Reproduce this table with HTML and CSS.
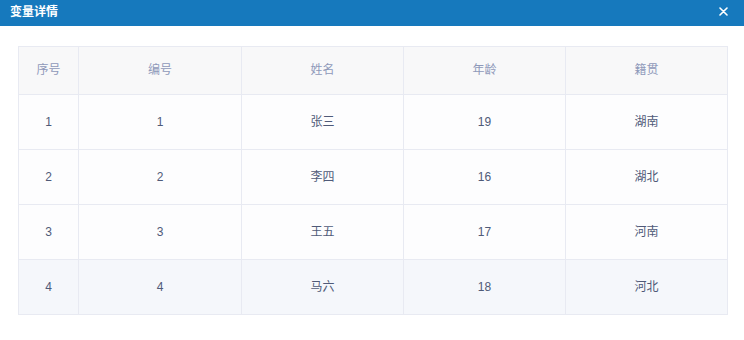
FILE: index.html
```html
<!DOCTYPE html>
<html lang="zh">
<head>
<meta charset="utf-8">
<link rel="stylesheet" href="styles.css">
</head>
<body>
<div class="dialog">
  <div class="header">
    <span class="title">变量详情</span>
    <span class="close">
      <svg width="9" height="9" viewBox="0 0 9 9"><path d="M1 1L8 8M8 1L1 8" stroke="#fff" stroke-width="1.6" stroke-linecap="round"/></svg>
    </span>
  </div>
  <div class="body">
    <table class="grid">
      <colgroup>
        <col class="c1"><col class="c2"><col class="c3"><col class="c4"><col class="c5">
      </colgroup>
      <thead>
        <tr><th>序号</th><th>编号</th><th>姓名</th><th>年龄</th><th>籍贯</th></tr>
      </thead>
      <tbody>
        <tr><td>1</td><td>1</td><td>张三</td><td>19</td><td>湖南</td></tr>
        <tr><td>2</td><td>2</td><td>李四</td><td>16</td><td>湖北</td></tr>
        <tr><td>3</td><td>3</td><td>王五</td><td>17</td><td>河南</td></tr>
        <tr class="hover"><td>4</td><td>4</td><td>马六</td><td>18</td><td>河北</td></tr>
      </tbody>
    </table>
  </div>
</div>
</body>
</html>
```
FILE: styles.css
```css
html, body {
  margin: 0;
  padding: 0;
  background: #fff;
  font-family: "Liberation Sans", "Noto Sans CJK SC", sans-serif;
  font-size: 12px;
}
.dialog {
  width: 744px;
  height: 340px;
  background: #fff;
}
.header {
  height: 26px;
  background: #1679bd;
  display: flex;
  align-items: center;
  justify-content: space-between;
  padding: 0 16px 0 10px;
  box-sizing: border-box;
}
.title {
  color: #fff;
  font-weight: bold;
  font-size: 12px;
  line-height: 14px;
  margin-top: -3px;
}
.close {
  display: flex;
  align-items: center;
  margin-top: -4px;
}
.body {
  padding: 20px 16px 0 18px;
}
.grid {
  border-collapse: collapse;
  table-layout: fixed;
  width: 710px;
}
.c1 { width: 60px; }
.c2 { width: 163px; }
.c3, .c4, .c5 { width: 162px; }
.grid th, .grid td {
  border: 1px solid #e8eaf2;
  text-align: center;
  font-weight: normal;
  line-height: 14px;
}
.grid th {
  height: 45px;
  padding: 0 0 2px;
  background: #f8f8f9;
  color: #8f99b9;
}
.grid td {
  height: 54px;
  padding: 0;
  color: #4f5a78;
  background: #fdfdfe;
}
.grid tr.hover td {
  background: #f5f7fb;
}
```
